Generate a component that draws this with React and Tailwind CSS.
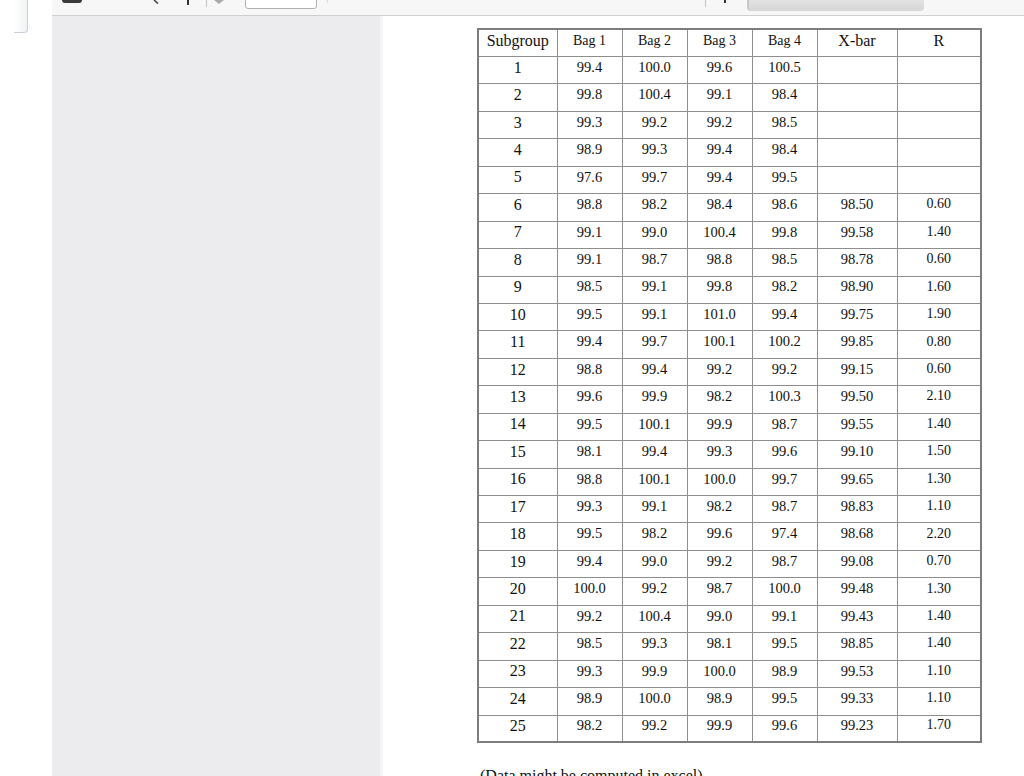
import React from "react";

const rows = [
  [1, "99.4", "100.0", "99.6", "100.5", "", ""],
  [2, "99.8", "100.4", "99.1", "98.4", "", ""],
  [3, "99.3", "99.2", "99.2", "98.5", "", ""],
  [4, "98.9", "99.3", "99.4", "98.4", "", ""],
  [5, "97.6", "99.7", "99.4", "99.5", "", ""],
  [6, "98.8", "98.2", "98.4", "98.6", "98.50", "0.60"],
  [7, "99.1", "99.0", "100.4", "99.8", "99.58", "1.40"],
  [8, "99.1", "98.7", "98.8", "98.5", "98.78", "0.60"],
  [9, "98.5", "99.1", "99.8", "98.2", "98.90", "1.60"],
  [10, "99.5", "99.1", "101.0", "99.4", "99.75", "1.90"],
  [11, "99.4", "99.7", "100.1", "100.2", "99.85", "0.80"],
  [12, "98.8", "99.4", "99.2", "99.2", "99.15", "0.60"],
  [13, "99.6", "99.9", "98.2", "100.3", "99.50", "2.10"],
  [14, "99.5", "100.1", "99.9", "98.7", "99.55", "1.40"],
  [15, "98.1", "99.4", "99.3", "99.6", "99.10", "1.50"],
  [16, "98.8", "100.1", "100.0", "99.7", "99.65", "1.30"],
  [17, "99.3", "99.1", "98.2", "98.7", "98.83", "1.10"],
  [18, "99.5", "98.2", "99.6", "97.4", "98.68", "2.20"],
  [19, "99.4", "99.0", "99.2", "98.7", "99.08", "0.70"],
  [20, "100.0", "99.2", "98.7", "100.0", "99.48", "1.30"],
  [21, "99.2", "100.4", "99.0", "99.1", "99.43", "1.40"],
  [22, "98.5", "99.3", "98.1", "99.5", "98.85", "1.40"],
  [23, "99.3", "99.9", "100.0", "98.9", "99.53", "1.10"],
  [24, "98.9", "100.0", "98.9", "99.5", "99.33", "1.10"],
  [25, "98.2", "99.2", "99.9", "99.6", "99.23", "1.70"],
];

const serif = { fontFamily: '"Liberation Serif", "Times New Roman", serif' };

export default function App() {
  return (
    <div className="w-[1024px] h-[776px] overflow-hidden flex bg-white" style={serif}>
      {/* left strip */}
      <div className="w-[52px] shrink-0 bg-white">
        <div className="ml-[14px] w-[14px] h-[33px] border-r border-b border-[#c9d0da] rounded-br-[4px] bg-gradient-to-r from-white to-[#f1f2f4]" />
      </div>

      <div className="flex-1 flex flex-col min-w-0">
        {/* toolbar */}
        <div className="h-[16px] shrink-0 bg-[#f7f7f7] border-b border-[#cfcfcf] flex items-start relative">
          <div className="ml-[10px] w-[20px] h-[3px] bg-[#3a3a3a] rounded-b-[3px]" />
          <div className="ml-[70px] w-[8px] h-[4px] flex items-start">
            <svg width="8" height="4" viewBox="0 0 8 4"><path d="M2 0 L6 3.5" stroke="#444" strokeWidth="1.6" fill="none" /></svg>
          </div>
          <div className="ml-[27px] w-[2px] h-[5px] bg-[#333]" />
          <div className="ml-[17px] w-px h-[7px] bg-[#c4c4c4]" />
          <div className="ml-[7px] w-0 h-0 border-l-[5px] border-r-[5px] border-t-[4px] border-l-transparent border-r-transparent border-t-[#aaa]" />
          <div className="ml-[21px] w-[72px] h-[10px] -mt-px bg-white border border-[#b0b0b0] rounded-b-[3px]" />
          <div className="ml-[10px] w-px h-[3px] bg-[#ddd]" />
          <div className="ml-[377px] w-px h-[7px] bg-[#c4c4c4]" />
          <div className="ml-[18px] w-[2px] h-[3px] bg-[#333]" />
          <div className="ml-[21px] w-[177px] h-[12px] -mt-px rounded-b-[4px] bg-gradient-to-b from-[#e4e4e4] to-[#d6d6d6] border-l-2 border-[#c8c8c8]" />
        </div>

        <div className="flex-1 flex min-h-0">
          {/* sidebar */}
          <div className="w-[328px] shrink-0 bg-[#ececee]" />
          {/* main */}
          <div className="flex-1 bg-white border-l-[3px] border-[#f5f5f6] pl-[94px] pt-[12px]">
            <table className="border-collapse border-2 border-[#7d7d7d] text-[#111] table-fixed" style={{ width: 503 }}>
              <colgroup>
                <col style={{ width: 79 }} />
                <col style={{ width: 65 }} />
                <col style={{ width: 65 }} />
                <col style={{ width: 65 }} />
                <col style={{ width: 65 }} />
                <col style={{ width: 80 }} />
                <col style={{ width: 84 }} />
              </colgroup>
              <thead>
                <tr className="h-[27.5px]">
                  <th className="border border-[#8e8e8e] font-normal text-[16px] leading-none pb-[4px] align-middle">Subgroup</th>
                  <th className="border border-[#8e8e8e] font-normal text-[14px] leading-none pb-[5px] align-middle">Bag 1</th>
                  <th className="border border-[#8e8e8e] font-normal text-[14px] leading-none pb-[5px] align-middle">Bag 2</th>
                  <th className="border border-[#8e8e8e] font-normal text-[14px] leading-none pb-[5px] align-middle">Bag 3</th>
                  <th className="border border-[#8e8e8e] font-normal text-[14px] leading-none pb-[5px] align-middle">Bag 4</th>
                  <th className="border border-[#8e8e8e] font-normal text-[16px] leading-none pb-[5px] align-middle">X-bar</th>
                  <th className="border border-[#8e8e8e] font-normal text-[16px] leading-none pb-[5px] align-middle">R</th>
                </tr>
              </thead>
              <tbody>
                {rows.map((r) => (
                  <tr key={r[0]} className="h-[27.45px]">
                    <td className="border border-[#8e8e8e] text-center text-[16px] leading-none pb-[5px] align-middle">{r[0]}</td>
                    <td className="border border-[#8e8e8e] text-center text-[14.5px] leading-none pb-[6px] align-middle">{r[1]}</td>
                    <td className="border border-[#8e8e8e] text-center text-[14.5px] leading-none pb-[6px] align-middle">{r[2]}</td>
                    <td className="border border-[#8e8e8e] text-center text-[14.5px] leading-none pb-[6px] align-middle">{r[3]}</td>
                    <td className="border border-[#8e8e8e] text-center text-[14.5px] leading-none pb-[6px] align-middle">{r[4]}</td>
                    <td className="border border-[#8e8e8e] text-center text-[14.5px] leading-none pb-[6px] align-middle">{r[5]}</td>
                    <td className="border border-[#8e8e8e] text-center text-[14px] leading-none pb-[6px] align-middle">{r[6]}</td>
                  </tr>
                ))}
              </tbody>
            </table>
            <p className="mt-[25px] ml-[3px] text-[16px] leading-none text-[#111]">(Data might be computed in excel)</p>
          </div>
        </div>
      </div>
    </div>
  );
}
